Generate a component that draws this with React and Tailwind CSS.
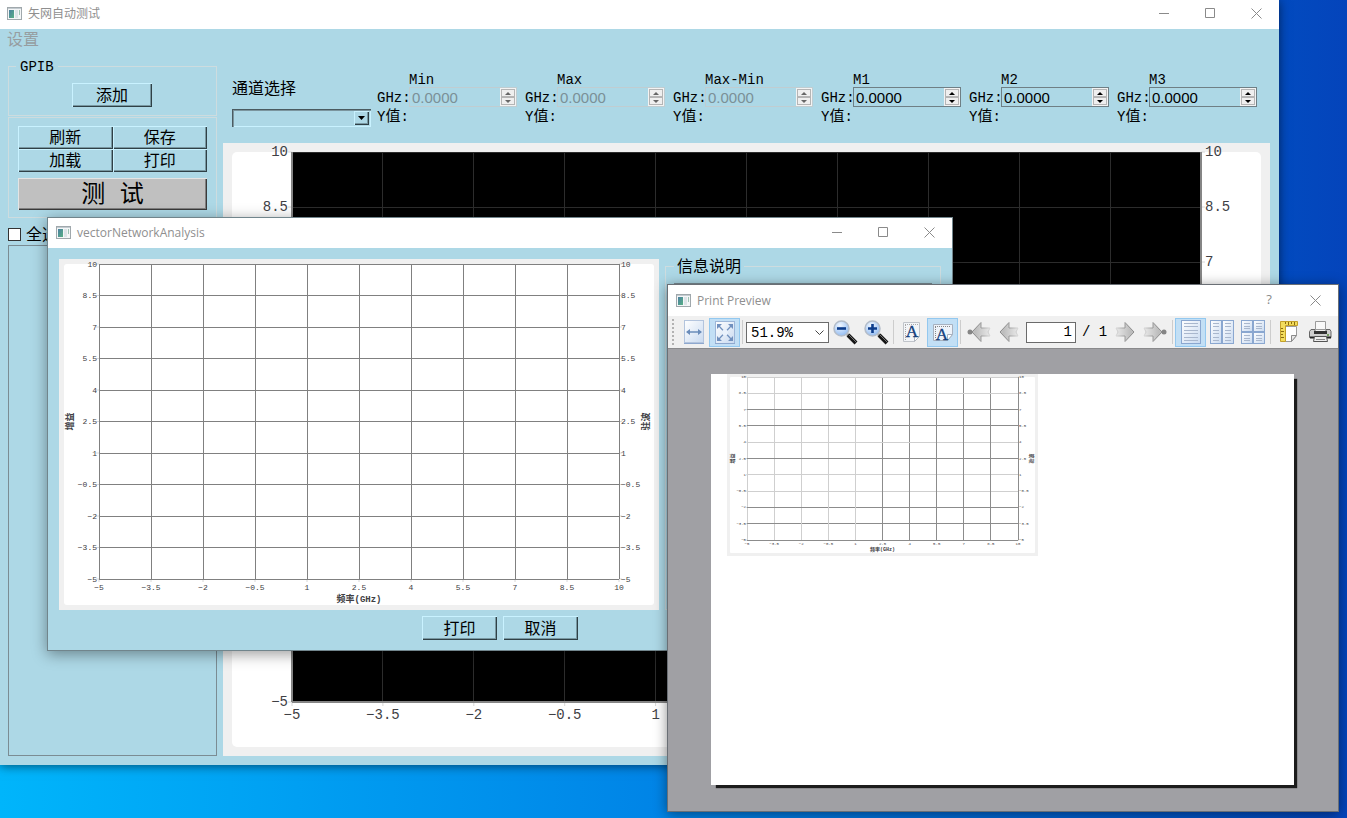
import { useState } from 'react'

const TICKS = [-5, -3.5, -2, -0.5, 1, 2.5, 4, 5.5, 7, 8.5, 10]

const BEVEL = 'shadow-[inset_1px_1px_#c9f2ff,inset_-1px_-1px_#2f4046,inset_-2px_-2px_#7898a2]'

const READOUTS = [
  { title: 'Min', disabled: true },
  { title: 'Max', disabled: true },
  { title: 'Max-Min', disabled: true },
  { title: 'M1' },
  { title: 'M2' },
  { title: 'M3' },
]

// lightX / lightY: tick indexes whose grid line is drawn paler
const CHARTS = {
  main: {
    frame: 'p-[9px]',
    panel: 'rounded-[5px]',
    plot: 'mx-[60px] mb-[45px]',
    text: 'text-[14px]',
    bg: '#000000',
    grid: '#2c2c2c',
    axis: '#858585',
    axisWidth: 2,
    tick: 4,
    gapY: 4,
    gapX: 13,
  },
  dialog: {
    frame: 'p-[5px]',
    panel: 'rounded-[3px]',
    plot: 'mx-[35px] mb-[26px]',
    text: 'text-[8px]',
    title: 'text-[9px]',
    titleGap: 28,
    bg: '#ffffff',
    grid: '#808080',
    axis: '#808080',
    axisWidth: 1,
    tick: 3,
    gapY: 2,
    gapX: 8,
  },
  preview: {
    frame: 'p-[3px]',
    panel: 'rounded-[1px]',
    plot: 'mx-[17px] mb-[13px]',
    text: 'text-[4px]',
    title: 'text-[5px]',
    titleGap: 14,
    bg: '#ffffff',
    grid: '#8c8c8c',
    lightX: [0, 1, 2, 3, 4],
    lightY: [3, 4, 6, 9, 10],
    axis: '#8c8c8c',
    axisWidth: 1,
    tick: 1,
    gapY: 1,
    gapX: 4,
  },
}

const formatTick = (t) => String(t).replace('-', '−')

function Chart({ kind }) {
  const c = CHARTS[kind]
  const shade = (light, i) => (light?.includes(i) ? '#cfcfcf' : c.grid)
  return (
    <div className={`w-full h-full bg-[#f0f0f0] ${c.frame}`}>
      <div className={`relative flex w-full h-full bg-white text-[#404044] ${c.panel}`}>
        <div className={`flex-1 min-w-0 ${c.plot}`}>
          <svg className={`block w-full h-full overflow-visible ${c.text}`}>
            <rect width="100%" height="100%" fill={c.bg} />
            {TICKS.map((t, i) => {
              const p = `${i * 10}%`
              const q = `${100 - i * 10}%`
              return (
                <g key={t}>
                  <line x1={p} x2={p} y1="0" y2="100%" stroke={shade(c.lightX, i)} shapeRendering="crispEdges" />
                  <line x1="0" x2="100%" y1={q} y2={q} stroke={shade(c.lightY, i)} shapeRendering="crispEdges" />
                  <svg x={p} y="100%" className="overflow-visible">
                    <line y2={c.tick} stroke="#d8d8d8" />
                    <text y={c.gapX} textAnchor="middle" dominantBaseline="central" fill="#404044">{formatTick(t)}</text>
                  </svg>
                  <svg x="0" y={q} className="overflow-visible">
                    <line x1={-c.tick} stroke="#d8d8d8" />
                    <text x={-c.gapY} textAnchor="end" dominantBaseline="central" fill="#404044">{formatTick(t)}</text>
                  </svg>
                  <svg x="100%" y={q} className="overflow-visible">
                    <line x2={c.tick} stroke="#d8d8d8" />
                    <text x={c.gapY} dominantBaseline="central" fill="#404044">{formatTick(t)}</text>
                  </svg>
                </g>
              )
            })}
            <g stroke={c.axis} strokeWidth={c.axisWidth} shapeRendering="crispEdges">
              {!c.lightX && <line x1="0" x2="0" y1="0" y2="100%" />}
              <line x1="100%" x2="100%" y1="0" y2="100%" />
              <line x1="0" x2="100%" y1="100%" y2="100%" />
            </g>
            {c.title && (
              <g className={`font-bold ${c.title}`} fill="#404044" textAnchor="middle">
                <svg x="0" y="50%" className="overflow-visible">
                  <text y={-c.titleGap} transform="rotate(-90)" dominantBaseline="central">增益</text>
                </svg>
                <svg x="100%" y="50%" className="overflow-visible">
                  <text y={c.titleGap} transform="rotate(-90)" dominantBaseline="central">驻波</text>
                </svg>
              </g>
            )}
          </svg>
        </div>
        {c.title && (
          <span className={`absolute inset-x-0 bottom-0 text-center leading-none font-bold ${c.title}`}>频率(GHz)</span>
        )}
      </div>
    </div>
  )
}

function WindowIcon() {
  return (
    <svg width="15" height="13" viewBox="0 0 15 13" className="shrink-0">
      <defs>
        <linearGradient id="pane" x1="0" y1="0" x2="1" y2="1">
          <stop offset="0" stopColor="#4a7fa0" />
          <stop offset="1" stopColor="#58b085" />
        </linearGradient>
      </defs>
      <rect x="0.5" y="0.5" width="14" height="12" fill="#f4f6f7" stroke="#a0a8ac" />
      <rect x="1" y="1" width="13" height="1" fill="#c3cbd0" />
      <rect x="2" y="3" width="5" height="8" fill="url(#pane)" />
      <rect x="8" y="3" width="3" height="8" fill="#dde4e8" />
      <rect x="12" y="3" width="1" height="5" fill="#9fc3b5" />
    </svg>
  )
}

function CaptionButton({ label, children }) {
  return (
    <button type="button" aria-label={label} className="w-[46px] h-full flex items-center justify-center text-[#8a8a8a] hover:bg-gray-200">
      {children}
    </button>
  )
}

function TitleBar({ title, height, sizable }) {
  return (
    <header className={`flex items-center shrink-0 bg-white ${height}`}>
      <WindowIcon />
      <h1 className="ml-[6px] pt-px flex-1 text-[12px] leading-4 font-normal text-[#8f8f8f] font-['Open_Sans','Noto_Sans_CJK_SC',sans-serif]">{title}</h1>
      {sizable ? (
        <>
          <CaptionButton label="最小化">
            <svg width="11" height="11"><path d="M0 5.5h10" stroke="currentColor" /></svg>
          </CaptionButton>
          <CaptionButton label="最大化">
            <svg width="11" height="11"><path d="M.5.5h9v9h-9z" fill="none" stroke="currentColor" /></svg>
          </CaptionButton>
        </>
      ) : (
        <CaptionButton label="Help"><span className="text-[13px] font-['Open_Sans',sans-serif]">?</span></CaptionButton>
      )}
      <CaptionButton label="Close">
        <svg width="11" height="11"><path d="M.5.5l10 10M10.5.5l-10 10" stroke="currentColor" /></svg>
      </CaptionButton>
    </header>
  )
}

function PushButton({ className, children }) {
  return (
    <button type="button" className={`pt-[3px] text-[16px] leading-5 text-black ${BEVEL} ${className}`}>
      {children}
    </button>
  )
}

function Readout({ title, disabled }) {
  const [value, setValue] = useState(0)
  const id = `ghz-${title}`
  return (
    <div className="grid grid-cols-[32px_108px] grid-rows-[16px_20px_18px] items-center text-[14px] whitespace-nowrap">
      <span className="col-start-2 pt-[3px]">{title}</span>
      <label htmlFor={id} className="pt-[3px]">GHz:</label>
      <div className={`flex h-5 border ${disabled ? 'border-[#c0cdd1]' : 'border-[#6f7f85]'}`}>
        <input
          id={id}
          readOnly
          disabled={disabled}
          value={value.toFixed(4)}
          className={`flex-1 min-w-0 pl-[2px] pt-[2px] text-[15px] bg-transparent outline-none font-['Liberation_Sans',sans-serif] ${disabled ? 'text-[#7b9097]' : 'text-black'}`}
        />
        <div className="w-4 flex flex-col bg-[#f3f3f3] p-px">
          {[1, -1].map((dir) => (
            <button
              key={dir}
              type="button"
              disabled={disabled}
              aria-label={dir > 0 ? `${title} +` : `${title} -`}
              onClick={() => setValue(value + dir)}
              className="flex-1 flex items-center justify-center border border-[#b5b5b5] bg-[#efefef]"
            >
              <svg width="6" height="3" viewBox="0 0 6 3">
                <path d={dir > 0 ? 'M0 3L3 0l3 3z' : 'M0 0h6L3 3z'} fill={disabled ? '#666' : '#000'} />
              </svg>
            </button>
          ))}
        </div>
      </div>
      <span className="col-span-2 pt-[4px]">Y<span className="text-[15px]">值</span>:</span>
    </div>
  )
}

function MainWindow() {
  return (
    <section className="absolute left-0 top-0 right-[68px] bottom-[53px] flex flex-col bg-[#add8e6] shadow-[0_1px_10px_rgba(0,0,0,0.55)]">
      <TitleBar title="矢网自动测试" height="h-[29px] pl-[7px] pb-[3px]" sizable />
      <nav className="h-7 shrink-0 pl-[7px] leading-6">
        <button type="button" disabled className="text-[16px] text-[#969da0]">设置</button>
      </nav>
      <div className="flex-1 min-h-0 flex gap-[6px] pl-2 pr-[9px] pb-[9px]">
        <aside className="w-[209px] shrink-0 flex flex-col">
          <fieldset className="h-[59px] border border-[#cddcdf] flex justify-center items-start">
            <legend className="ml-[7px] px-1 pt-[2px] text-[14px] leading-4">GPIB</legend>
            <PushButton className="w-20 h-6 mt-2 mr-px">添加</PushButton>
          </fieldset>
          <div className="mt-px border border-[#cddcdf] px-[9px] pt-2 pb-[7px]">
            <div className="grid grid-cols-2">
              <PushButton className="h-[23px]">刷新</PushButton>
              <PushButton className="h-[23px]">保存</PushButton>
              <PushButton className="h-[23px]">加载</PushButton>
              <PushButton className="h-[23px]">打印</PushButton>
            </div>
            <button type="button" className="mt-[6px] w-full h-8 pt-1 bg-[#c0c0c0] text-[24px] leading-7 shadow-[inset_1px_1px_#e4e4e4,inset_-1px_-1px_#3a3a3a,inset_-2px_-2px_#808080]">
              测 试
            </button>
          </div>
          <label className="mt-[6px] h-[21px] flex items-center gap-[5px] text-[16px] leading-5">
            <input type="checkbox" className="appearance-none w-[13px] h-[13px] bg-white border border-[#333] checked:bg-black" />
            <span className="pt-[2px]">全选</span>
          </label>
          <div className="flex-1 border border-[#7b8c93]" />
        </aside>

        <main className="flex-1 min-w-0 flex flex-col">
          <div className="h-[86px] shrink-0 flex pl-[9px]">
            <div className="w-[139px] shrink-0 pt-[23px]">
              <label htmlFor="channel" className="block text-[16px] leading-5">通道选择</label>
              <div className="relative mt-[9px]">
                <select id="channel" className="block appearance-none w-full h-[18px] bg-transparent outline-none shadow-[inset_1px_1px_#4b5b61,inset_2px_2px_#7b959e,inset_-1px_-1px_#c9f2ff]" />
                <span className={`absolute right-[2px] top-[2px] w-[15px] h-[14px] flex items-center justify-center bg-[#add8e6] pointer-events-none ${BEVEL}`}>
                  <svg width="7" height="4"><path d="M0 0h7L3.5 4z" /></svg>
                </span>
              </div>
            </div>
            <div className="ml-[6px] pt-[14px] flex gap-2">
              {READOUTS.map((r) => <Readout key={r.title} {...r} />)}
            </div>
          </div>
          <div className="flex-1 min-h-0">
            <Chart kind="main" />
          </div>
        </main>
      </div>
    </section>
  )
}

function AnalysisDialog() {
  return (
    <section className="absolute left-[47px] top-[217px] right-[394px] bottom-[167px] flex flex-col border border-[#71858c] bg-[#add8e6] shadow-[0_3px_14px_rgba(0,0,0,0.4)]">
      <TitleBar title="vectorNetworkAnalysis" height="h-[30px] pb-px pl-[8px]" sizable />
      <div className="flex-1 min-h-0 flex gap-[6px] pt-[11px] pl-[11px] pr-[11px]">
        <div className="flex-1 min-w-0">
          <Chart kind="dialog" />
        </div>
        <fieldset className="w-[276px] -mt-[2px] border border-[#cddcdf] px-2 pt-2">
          <legend className="px-[3px] pt-[5px] text-[16px] leading-[13px]">信息说明</legend>
          <div className="h-full border border-[#7b8c93]" />
        </fieldset>
      </div>
      <footer className="h-10 shrink-0 pt-[6px] flex justify-center gap-[6px]">
        <PushButton className="w-[75px] h-6">打印</PushButton>
        <PushButton className="w-[75px] h-6">取消</PushButton>
      </footer>
    </section>
  )
}

function Defs() {
  return (
    <svg width="0" height="0" className="absolute" aria-hidden="true">
      <defs>
        <linearGradient id="paper" x1="0" y1="0" x2="1" y2="1">
          <stop offset="0" stopColor="#ffffff" />
          <stop offset="1" stopColor="#c9daf0" />
        </linearGradient>
        <linearGradient id="arrow" x1="0" y1="0" x2="1" y2="0">
          <stop offset="0.2" stopColor="#bdbdbd" />
          <stop offset="1" stopColor="#e9e9e9" />
        </linearGradient>
        <linearGradient id="arrowEdge" x1="0" y1="0" x2="1" y2="0">
          <stop offset="0.4" stopColor="#8c8c8c" />
          <stop offset="1" stopColor="#d8d8d8" />
        </linearGradient>
        <radialGradient id="lens" cx="0.4" cy="0.3" r="0.8">
          <stop offset="0" stopColor="#f2f8ff" />
          <stop offset="1" stopColor="#86b4f0" />
        </radialGradient>
      </defs>
    </svg>
  )
}

function FitWidthIcon() {
  return (
    <svg width="22" height="26">
      <rect x="1.5" y="1.5" width="19" height="22" fill="url(#paper)" stroke="#b3c4dd" />
      <path d="M1 24.5h20" stroke="#8ea8cf" strokeWidth="1" />
      <path d="M4 13h14" stroke="#6a8cba" strokeWidth="1.5" />
      <path d="M3 13l4-3v6zM19 13l-4-3v6z" fill="#6a8cba" />
    </svg>
  )
}

function FitPageIcon() {
  return (
    <svg width="22" height="26">
      <rect x="1.5" y="2.5" width="19" height="22" fill="url(#paper)" stroke="#9db6d8" />
      <path d="M1 24.5h20" stroke="#8ea8cf" strokeWidth="1" />
      <path d="M5 7l12 13M17 7L5 20" stroke="#7090be" strokeWidth="1.2" />
      <path d="M3 5h5l-5 5zM19 5v5l-5-5zM3 22v-5l5 5zM19 22h-5l5-5z" fill="#7090be" />
      <circle cx="11" cy="13.5" r="3" fill="#eaf2fc" />
    </svg>
  )
}

function ZoomIcon({ plus }) {
  return (
    <svg width="26" height="26">
      <path d="M14 14l3 3" stroke="#aaa" strokeWidth="3" />
      <path d="M16 16l8 8" stroke="#161616" strokeWidth="4" />
      <path d="M17 16l7 7" stroke="#777" strokeWidth="1" />
      <circle cx="9.5" cy="9.5" r="7.5" fill="url(#lens)" stroke="#b4bdc9" strokeWidth="1.5" />
      <path d={plus ? 'M5 9.5h9M9.5 5v9' : 'M5 9.5h9'} stroke="#0c3c8c" strokeWidth="2.6" />
    </svg>
  )
}

function OrientationIcon({ landscape }) {
  return landscape ? (
    <svg width="22" height="26" className="overflow-visible">
      <path d="M1.5 5.5h19v10l-5 6h-14z" fill="#eef3fa" stroke="#a7b1bf" />
      <path d="M20.5 15.5h-5v6z" fill="#fff" stroke="#a7b1bf" />
      <path d="M3 7.5h16M3.5 8v11" stroke="#888" strokeDasharray="1 1" fill="none" />
      <text x="10" y="21" textAnchor="middle" fill="#143f7c" stroke="#143f7c" strokeWidth="0.4" className="text-[17px] font-['Liberation_Serif',serif]">A</text>
    </svg>
  ) : (
    <svg width="20" height="24" className="overflow-visible">
      <path d="M1.5 2.5h16v14l-5 5h-11z" fill="#f3f5f8" stroke="#c0c4ca" />
      <path d="M17.5 16.5h-5v5z" fill="#fff" stroke="#b3b8c0" />
      <path d="M3 4.5h13M3.5 5v15" stroke="#aaa" strokeDasharray="1 1" fill="none" />
      <text x="10" y="17" textAnchor="middle" fill="#143f7c" stroke="#143f7c" strokeWidth="0.4" className="text-[17px] font-['Liberation_Serif',serif]">A</text>
    </svg>
  )
}

function ArrowIcon({ right, end }) {
  return (
    <svg width="24" height="22" viewBox="0 0 24 22" className={right ? '-scale-x-100' : ''}>
      <g transform={end ? 'translate(3 0)' : undefined}>
        <path d="M2 11L11 1.5V7h9l-2 4 2 4h-9v5.5z" fill="url(#arrow)" stroke="url(#arrowEdge)" />
        {end && <circle cx="0" cy="11" r="2.5" fill="#858585" />}
      </g>
    </svg>
  )
}

function PagesIcon({ boxes, lines }) {
  return (
    <svg width="26" height="26">
      {boxes.map(([x, y, w, h]) => (
        <g key={`${x}-${y}`}>
          <rect x={x + 0.5} y={y + 0.5} width={w - 1} height={h - 1} fill="url(#paper)" stroke="#8aa7d0" />
          {Array.from({ length: lines }, (_, i) => {
            const ly = y + 4 + Math.round((i * (h - 7)) / (lines - 1))
            return <path key={i} d={`M${x + 3} ${ly - 0.5}h${w - 6}`} stroke="#a9b7cd" />
          })}
        </g>
      ))}
    </svg>
  )
}

function PageSetupIcon() {
  return (
    <svg width="20" height="24">
      <path d="M5.5 6.5h12v9l-5 6h-7z" fill="#fff" stroke="#9b9b9b" />
      <path d="M17.5 15.5h-5v6z" fill="#e8e8e8" stroke="#8b8b8b" />
      <path d="M1.5 1.5h17v4h-12v16h-5z" fill="#f2dc5c" stroke="#c4a12a" />
      <path d="M6.5 2v2M9.5 2v3M12.5 2v2M15.5 2v3M2 8.5h2M2 11.5h3M2 14.5h2M2 17.5h3" stroke="#8a6c10" />
    </svg>
  )
}

function PrinterIcon() {
  return (
    <svg width="24" height="24">
      <path d="M7.5 1.5h10v8h-10z" fill="#f8f8f8" stroke="#9a9a9a" />
      <path d="M3 9.5h4v2h11v-2h4l1 2v6H1.5v-6z" fill="#cfcfcf" stroke="#666" />
      <path d="M6 11h13v3H6z" fill="#333" />
      <path d="M2 17.5h21" stroke="#222" strokeWidth="2" />
      <path d="M6.5 16.5h12l1 5h-14z" fill="#eee" stroke="#555" />
      <path d="M8 19.5h9" stroke="#888" />
      <circle cx="20" cy="15" r="1" fill="#5a8f3c" />
    </svg>
  )
}

function ToolButton({ label, active, children }) {
  return (
    <button
      type="button"
      aria-label={label}
      aria-pressed={active}
      className={`w-[31px] h-[29px] shrink-0 flex items-center justify-center border ${active ? 'bg-[#c2dff5] border-[#93c8ef]' : 'border-transparent'}`}
    >
      {children}
    </button>
  )
}

function Separator() {
  return <span className="px-[2px] h-6 shrink-0 flex"><span className="w-px bg-[#cdcdcd]" /></span>
}

function PreviewToolbar() {
  const [page, setPage] = useState('1')
  return (
    <div className="h-[33px] shrink-0 flex items-center bg-[#f0f0f0] border-b border-[#8a8a8c] text-[14px] text-black">
      <span className="w-[10px] shrink-0 flex justify-center">
        <span className="h-[26px] w-0 border-l-2 border-dotted border-[#b2b2b2]" />
      </span>
      <ToolButton label="Fit width"><FitWidthIcon /></ToolButton>
      <ToolButton label="Fit page" active><FitPageIcon /></ToolButton>
      <Separator />
      <div className="relative ml-px w-[83px] shrink-0">
        <select aria-label="Zoom" className="block appearance-none w-full h-[21px] pl-1 bg-white border border-[#6b6b6b] outline-none">
          <option>51.9%</option>
        </select>
        <svg width="9" height="6" className="absolute right-[5px] top-2 pointer-events-none">
          <path d="M.5.5l4 4 4-4" fill="none" stroke="#444" />
        </svg>
      </div>
      <ToolButton label="Zoom out"><ZoomIcon /></ToolButton>
      <ToolButton label="Zoom in"><ZoomIcon plus /></ToolButton>
      <Separator />
      <ToolButton label="Portrait"><OrientationIcon /></ToolButton>
      <ToolButton label="Landscape" active><OrientationIcon landscape /></ToolButton>
      <Separator />
      <ToolButton label="First page"><ArrowIcon end /></ToolButton>
      <ToolButton label="Previous page"><ArrowIcon /></ToolButton>
      <input
        aria-label="Page"
        value={page}
        onChange={(e) => setPage(e.target.value)}
        className="mx-px w-[50px] shrink-0 h-[21px] px-[3px] text-right bg-white border border-[#6b6b6b] outline-none"
      />
      <span className="w-[31px] shrink-0 pl-1 text-center whitespace-pre">/ 1</span>
      <ToolButton label="Next page"><ArrowIcon right /></ToolButton>
      <ToolButton label="Last page"><ArrowIcon right end /></ToolButton>
      <Separator />
      <ToolButton label="Single page" active><PagesIcon boxes={[[3, 1, 20, 24]]} lines={6} /></ToolButton>
      <ToolButton label="Facing pages"><PagesIcon boxes={[[1, 1, 12, 24], [13, 1, 12, 24]]} lines={6} /></ToolButton>
      <ToolButton label="All pages"><PagesIcon boxes={[[1, 1, 12, 12], [13, 1, 12, 12], [1, 13, 12, 12], [13, 13, 12, 12]]} lines={3} /></ToolButton>
      <Separator />
      <ToolButton label="Page setup"><PageSetupIcon /></ToolButton>
      <ToolButton label="Print"><PrinterIcon /></ToolButton>
    </div>
  )
}

function PrintPreview() {
  return (
    <section className="absolute left-[667px] top-[284px] right-[8px] bottom-[6px] flex flex-col border border-[#6a6f75] bg-[#a0a0a4] shadow-[0_2px_12px_rgba(0,0,0,0.45)]">
      <TitleBar title="Print Preview" height="h-[31px] pb-px pl-[8px]" />
      <PreviewToolbar />
      <div className="flex-1 min-h-0 pt-[25px] pb-[26px] pl-[43px] pr-[44px]">
        <div className="h-full bg-white pl-4 shadow-[4px_4px_1px_-1px_#1c1c1c]">
          <div className="w-[311px] h-[182px]">
            <Chart kind="preview" />
          </div>
        </div>
      </div>
    </section>
  )
}

export default function App() {
  return (
    <div className="relative w-full h-screen overflow-hidden text-black bg-linear-to-r from-[#00b5fb] via-[#0083e6] to-[#0444bb] font-['Liberation_Mono','Noto_Sans_CJK_SC',monospace]">
      <Defs />
      <MainWindow />
      <AnalysisDialog />
      <PrintPreview />
    </div>
  )
}
